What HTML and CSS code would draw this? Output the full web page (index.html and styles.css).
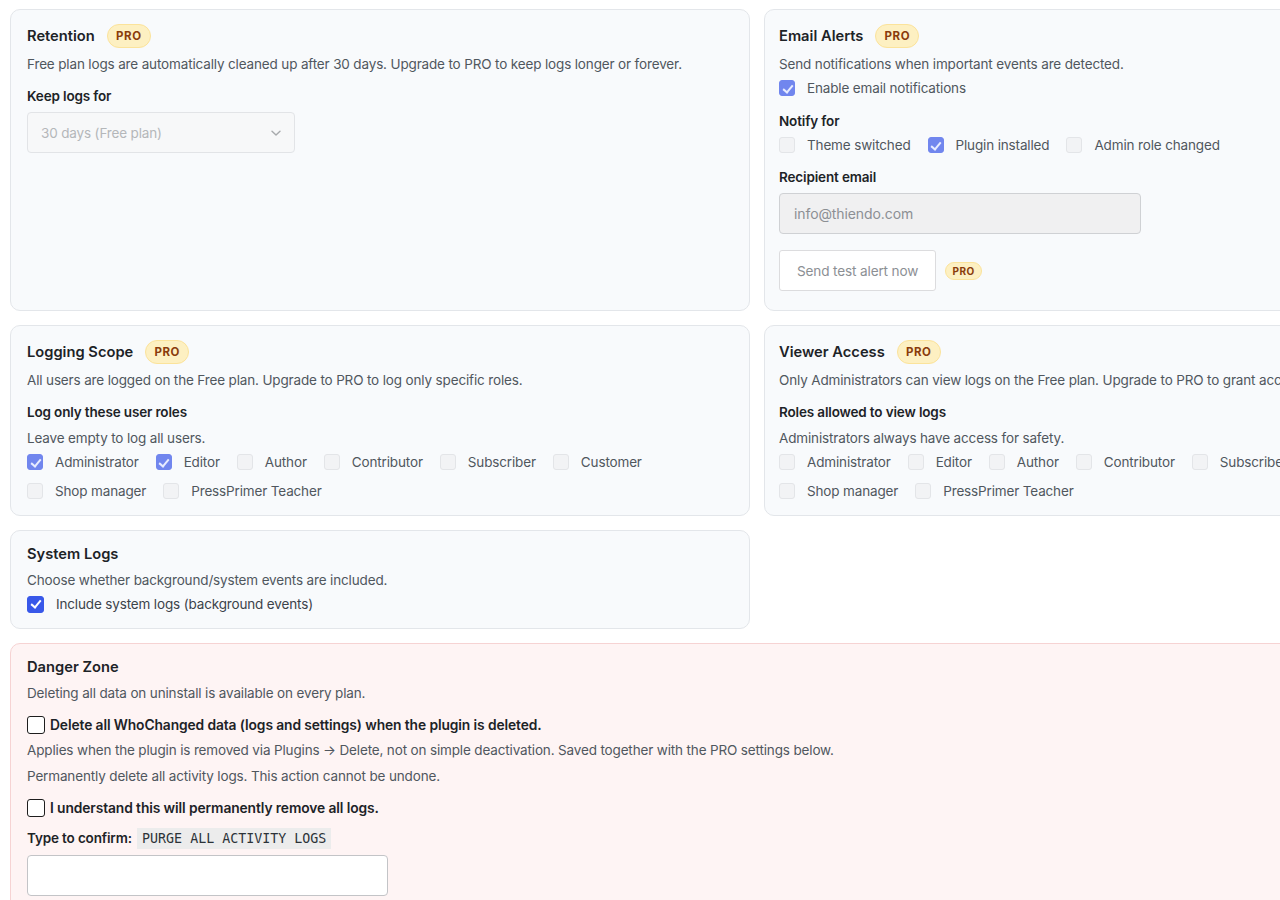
FILE: index.html
```html
<!DOCTYPE html>
<html lang="en">
<head>
    <meta charset="UTF-8">
    <meta name="viewport" content="width=device-width, initial-scale=1.0">
    <title>WhoChanged Settings</title>
    <link rel="stylesheet" href="styles.css">
</head>
<body>
    <div class="settings">
        <!-- Retention -->
        <div class="card">
            <div class="card-head">
                <h2>Retention</h2>
                <span class="pro">PRO</span>
            </div>
            <p class="desc">Free plan logs are automatically cleaned up after 30 days. Upgrade to PRO to keep logs longer or forever.</p>
            <p class="label">Keep logs for</p>
            <div class="select">
                <span>30 days (Free plan)</span>
                <svg width="14" height="14" viewBox="0 0 14 14"><path d="M3 5.2 7 9l4-3.8" fill="none" stroke="#a7aaad" stroke-width="1.4" stroke-linecap="round" stroke-linejoin="round"/></svg>
            </div>
        </div>

        <!-- Email alerts -->
        <div class="card right alerts">
            <div class="card-head">
                <h2>Email Alerts</h2>
                <span class="pro">PRO</span>
            </div>
            <p class="desc">Send notifications when important events are detected.</p>
            <div class="checks">
                <label class="check"><input type="checkbox" checked disabled> Enable email notifications</label>
            </div>
            <p class="label">Notify for</p>
            <div class="checks">
                <label class="check"><input type="checkbox" disabled> Theme switched</label>
                <label class="check"><input type="checkbox" checked disabled> Plugin installed</label>
                <label class="check"><input type="checkbox" disabled> Admin role changed</label>
            </div>
            <p class="label near">Recipient email</p>
            <input class="email" type="text" value="info@thiendo.com" disabled>
            <div class="actions">
                <button disabled>Send test alert now</button>
                <span class="pro small">PRO</span>
            </div>
        </div>

        <!-- Logging scope -->
        <div class="card">
            <div class="card-head">
                <h2>Logging Scope</h2>
                <span class="pro">PRO</span>
            </div>
            <p class="desc">All users are logged on the Free plan. Upgrade to PRO to log only specific roles.</p>
            <p class="label">Log only these user roles</p>
            <p class="hint">Leave empty to log all users.</p>
            <div class="checks">
                <label class="check"><input type="checkbox" checked disabled> Administrator</label>
                <label class="check"><input type="checkbox" checked disabled> Editor</label>
                <label class="check"><input type="checkbox" disabled> Author</label>
                <label class="check"><input type="checkbox" disabled> Contributor</label>
                <label class="check"><input type="checkbox" disabled> Subscriber</label>
                <label class="check"><input type="checkbox" disabled> Customer</label>
                <label class="check"><input type="checkbox" disabled> Shop manager</label>
                <label class="check"><input type="checkbox" disabled> PressPrimer Teacher</label>
            </div>
        </div>

        <!-- Viewer access -->
        <div class="card right">
            <div class="card-head">
                <h2>Viewer Access</h2>
                <span class="pro">PRO</span>
            </div>
            <p class="desc">Only Administrators can view logs on the Free plan. Upgrade to PRO to grant access to other roles.</p>
            <p class="label">Roles allowed to view logs</p>
            <p class="hint">Administrators always have access for safety.</p>
            <div class="checks">
                <label class="check"><input type="checkbox" disabled> Administrator</label>
                <label class="check"><input type="checkbox" disabled> Editor</label>
                <label class="check"><input type="checkbox" disabled> Author</label>
                <label class="check"><input type="checkbox" disabled> Contributor</label>
                <label class="check"><input type="checkbox" disabled> Subscriber</label>
                <label class="check"><input type="checkbox" disabled> Customer</label>
                <label class="check"><input type="checkbox" disabled> Shop manager</label>
                <label class="check"><input type="checkbox" disabled> PressPrimer Teacher</label>
            </div>
        </div>

        <!-- System logs -->
        <div class="card">
            <div class="card-head plain">
                <h2>System Logs</h2>
            </div>
            <p class="desc">Choose whether background/system events are included.</p>
            <div class="checks">
                <label class="check"><input type="checkbox" checked> Include system logs (background events)</label>
            </div>
        </div>

        <!-- Danger zone -->
        <div class="card danger">
            <div class="card-head plain">
                <h2>Danger Zone</h2>
            </div>
            <p class="desc">Deleting all data on uninstall is available on every plan.</p>
            <label class="strong-check"><input type="checkbox"> Delete all WhoChanged data (logs and settings) when the plugin is deleted.</label>
            <p class="note first">Applies when the plugin is removed via Plugins → Delete, not on simple deactivation. Saved together with the PRO settings below.</p>
            <p class="note">Permanently delete all activity logs. This action cannot be undone.</p>
            <label class="strong-check"><input type="checkbox"> I understand this will permanently remove all logs.</label>
            <p class="confirm">Type to confirm: <code>PURGE ALL ACTIVITY LOGS</code></p>
            <input class="confirm-input" type="text">
        </div>
    </div>
</body>
</html>
```

FILE: styles.css
```css
html, body {
    overflow: hidden;
}

body {
    margin: 0;
    padding: 9px 10px;
    background: #ffffff;
    font-family: Inter, "Noto Sans", sans-serif;
    font-size: 13.5px;
    letter-spacing: -0.15px;
    color: #1d2327;
}

p {
    margin: 0;
}

.settings {
    display: grid;
    grid-template-columns: 740px 740px;
    gap: 14px;
    align-items: stretch;
}

.card {
    background: #f8fafc;
    border: 1px solid #e3e6ea;
    border-radius: 10px;
    padding: 14px 16px 13px;
}

.card.right {
    padding-left: 14px;
}

.card.alerts {
    padding-bottom: 19px;
}

.card-head {
    display: flex;
    align-items: center;
    gap: 12px;
    height: 24px;
}

.card-head.plain {
    height: 20px;
    margin-top: -1px;
}

.card-head h2 {
    margin: 0;
    font-size: 14.7px;
    font-weight: 600;
    letter-spacing: 0;
    line-height: 20px;
    color: #1d2327;
}

/* PRO badge */
.pro {
    display: inline-flex;
    align-items: center;
    justify-content: center;
    width: 44px;
    height: 24px;
    box-sizing: border-box;
    border-radius: 12px;
    background: #fdf0c2;
    border: 1px solid #fbe39b;
    color: #8a3c0c;
    font-size: 11.5px;
    font-weight: 700;
    letter-spacing: 0.6px;
}

.pro.small {
    width: 37px;
    height: 18px;
    font-size: 10px;
    letter-spacing: 0.5px;
}

.desc {
    margin-top: 6px;
    line-height: 20px;
    color: #50575e;
}

.label {
    margin-top: 12px;
    line-height: 20px;
    font-weight: 600;
    color: #1d2327;
}

.label.near {
    margin-top: 11px;
}

.hint {
    margin-top: 6px;
    line-height: 20px;
    color: #50575e;
}

.checks {
    display: flex;
    flex-wrap: wrap;
    column-gap: 17px;
    row-gap: 7px;
    margin-top: 3px;
}

.check {
    display: flex;
    align-items: center;
    gap: 12px;
    height: 22px;
    color: #50575e;
}

.check input {
    appearance: none;
    margin: 0;
    width: 16px;
    height: 16px;
    box-sizing: border-box;
    border-radius: 3px;
    background: #f2f3f5;
    border: 1px solid #e3e5e8;
    position: relative;
}

.check input:checked {
    background: #7186ee;
    border-color: #7186ee;
}

.check input:checked:not(:disabled) {
    width: 17px;
    height: 17px;
    background: #3858e9;
    border-color: #3858e9;
}

.check input:checked::after {
    content: "";
    position: absolute;
    left: 4.5px;
    top: 1.5px;
    width: 4px;
    height: 8px;
    border: solid #ffffff;
    border-width: 0 2px 2px 0;
    transform: rotate(40deg);
}

.check input:checked:disabled::after {
    border-color: #e8ecff;
}

.card .check:has(input:not(:disabled)) {
    color: #3c434a;
}

/* selects and fields */
.select {
    margin-top: 6px;
    width: 268px;
    height: 41px;
    box-sizing: border-box;
    display: flex;
    align-items: center;
    justify-content: space-between;
    padding: 0 11px 0 13px;
    background: #f7f8f9;
    border: 1px solid #e2e4e7;
    border-radius: 4px;
    color: #b4b7ba;
}

.email {
    display: block;
    margin-top: 6px;
    width: 362px;
    height: 41px;
    box-sizing: border-box;
    padding: 0 14px;
    background: #f0f0f1;
    border: 1px solid #cfd1d4;
    border-radius: 4px;
    font-family: inherit;
    font-size: 14px;
    letter-spacing: -0.1px;
    color: #8c8f94;
}

.actions {
    display: flex;
    align-items: center;
    gap: 9px;
    margin-top: 16px;
}

.actions button {
    height: 41px;
    padding: 0 17px;
    background: #ffffff;
    border: 1px solid #dcdcde;
    border-radius: 3px;
    font-family: inherit;
    font-size: 13.6px;
    letter-spacing: -0.15px;
    color: #8c8f94;
}

/* danger zone */
.danger {
    grid-column: 1 / -1;
    background: #fef4f4;
    border-color: #f6d3d3;
    padding-bottom: 20px;
}

.strong-check {
    display: flex;
    align-items: center;
    gap: 5px;
    height: 22px;
    margin-top: 11px;
    font-size: 13.8px;
    font-weight: 600;
    letter-spacing: -0.1px;
    color: #1d2327;
}

.strong-check input {
    appearance: none;
    margin: 0;
    width: 18px;
    height: 18px;
    box-sizing: border-box;
    border: 1.5px solid #1e1e1e;
    border-radius: 3px;
    background: #ffffff;
}

.note {
    margin-top: 6px;
    line-height: 20px;
    color: #50575e;
}

.note.first {
    margin-top: 4px;
}

.confirm {
    margin-top: 7px;
    line-height: 24px;
    font-weight: 600;
    color: #1d2327;
}

.confirm code {
    margin-left: 2px;
    padding: 3px 5px;
    background: #ececec;
    font-family: "DejaVu Sans Mono", "Liberation Mono", monospace;
    font-size: 13.3px;
    font-weight: 400;
    letter-spacing: 0;
    color: #2c3338;
}

.confirm-input {
    display: block;
    margin-top: 4px;
    width: 361px;
    height: 41px;
    box-sizing: border-box;
    background: #ffffff;
    border: 1px solid #c3c4c7;
    border-radius: 4px;
}
```
